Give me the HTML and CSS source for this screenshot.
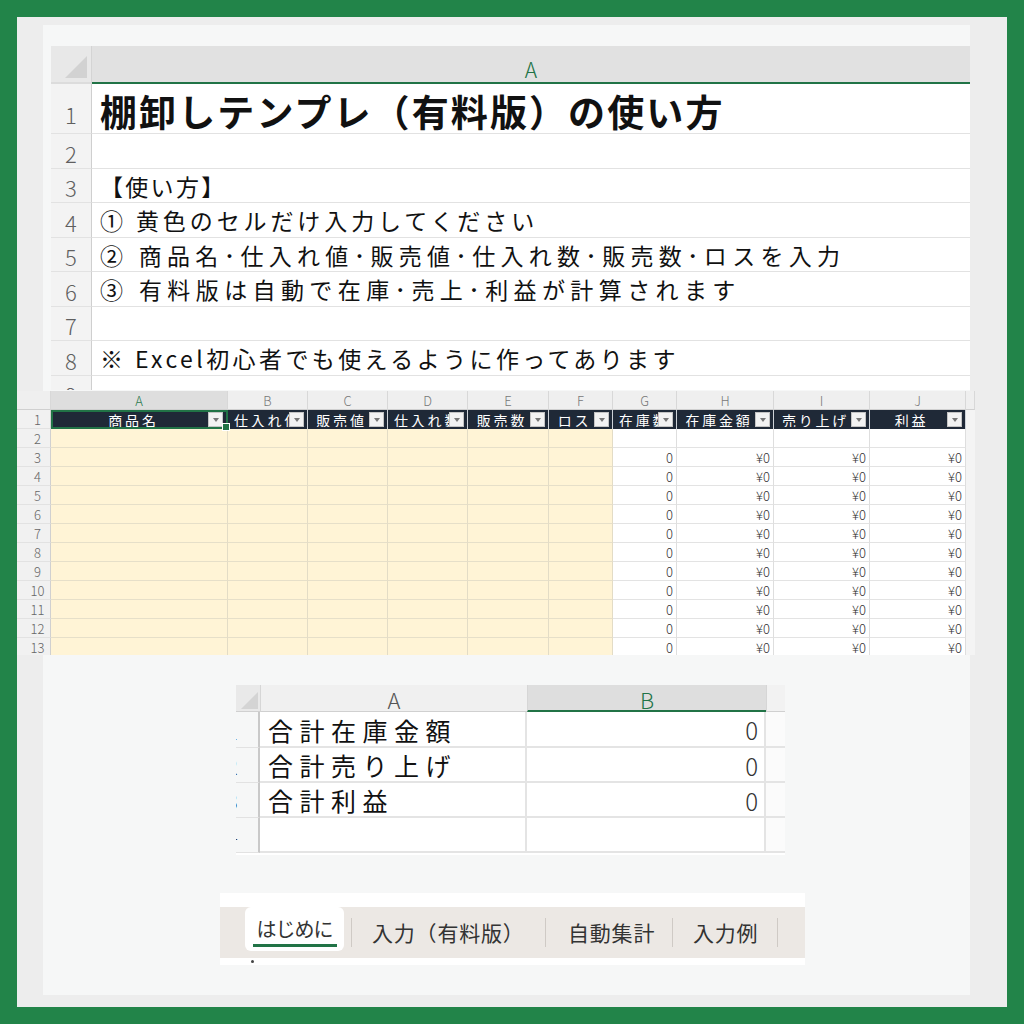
FILE: index.html
```html
<!DOCTYPE html>
<html lang="ja">
<head>
<meta charset="utf-8">
<title>棚卸しテンプレ</title>
<link rel="stylesheet" href="styles.css">
</head>
<body>
<div class="paper">

  <section class="s1">
    <div class="corner1"></div>
    <div class="ch1">A</div>
    <div class="rh1 r1">1</div><div class="c1 title">棚卸しテンプレ（有料版）の使い方</div>
    <div class="rh1">2</div><div class="c1"></div>
    <div class="rh1">3</div><div class="c1">【使い方】</div>
    <div class="rh1">4</div><div class="c1 l4">①&nbsp;黄色のセルだけ入力してください</div>
    <div class="rh1">5</div><div class="c1 l5">②&nbsp;商品名･仕入れ値･販売値･仕入れ数･販売数･ロスを入力</div>
    <div class="rh1">6</div><div class="c1 l6">③&nbsp;有料版は自動で在庫･売上･利益が計算されます</div>
    <div class="rh1">7</div><div class="c1"></div>
    <div class="rh1">8</div><div class="c1 l8">※&nbsp;Excel初心者でも使えるように作ってあります</div>
    <div class="rh1">9</div><div class="c1"></div>
  </section>

  <section class="s2">
    <div class="ch2"></div>
    <div class="ch2 sel">A</div><div class="ch2">B</div><div class="ch2">C</div><div class="ch2">D</div><div class="ch2">E</div><div class="ch2">F</div><div class="ch2">G</div><div class="ch2">H</div><div class="ch2">I</div><div class="ch2">J</div><div class="ch2"></div>

    <div class="rh2">1</div>
    <div class="hd a1"><span>商品名</span><i></i></div>
    <div class="hd"><span>仕入れ値</span><i></i></div>
    <div class="hd"><span>販売値</span><i></i></div>
    <div class="hd"><span>仕入れ数</span><i></i></div>
    <div class="hd"><span>販売数</span><i></i></div>
    <div class="hd"><span>ロス</span><i></i></div>
    <div class="hd"><span>在庫数</span><i></i></div>
    <div class="hd"><span>在庫金額</span><i></i></div>
    <div class="hd"><span>売り上げ</span><i></i></div>
    <div class="hd"><span>利益</span><i></i></div>
    <div class="tl"></div>

    <div class="rh2">2</div><div class="y"></div><div class="y"></div><div class="y"></div><div class="y"></div><div class="y"></div><div class="y"></div><div class="n"></div><div class="n"></div><div class="n"></div><div class="n"></div><div class="tl"></div>
    <div class="rh2">3</div><div class="y"></div><div class="y"></div><div class="y"></div><div class="y"></div><div class="y"></div><div class="y"></div><div class="n">0</div><div class="n">¥0</div><div class="n">¥0</div><div class="n">¥0</div><div class="tl"></div>
    <div class="rh2">4</div><div class="y"></div><div class="y"></div><div class="y"></div><div class="y"></div><div class="y"></div><div class="y"></div><div class="n">0</div><div class="n">¥0</div><div class="n">¥0</div><div class="n">¥0</div><div class="tl"></div>
    <div class="rh2">5</div><div class="y"></div><div class="y"></div><div class="y"></div><div class="y"></div><div class="y"></div><div class="y"></div><div class="n">0</div><div class="n">¥0</div><div class="n">¥0</div><div class="n">¥0</div><div class="tl"></div>
    <div class="rh2">6</div><div class="y"></div><div class="y"></div><div class="y"></div><div class="y"></div><div class="y"></div><div class="y"></div><div class="n">0</div><div class="n">¥0</div><div class="n">¥0</div><div class="n">¥0</div><div class="tl"></div>
    <div class="rh2">7</div><div class="y"></div><div class="y"></div><div class="y"></div><div class="y"></div><div class="y"></div><div class="y"></div><div class="n">0</div><div class="n">¥0</div><div class="n">¥0</div><div class="n">¥0</div><div class="tl"></div>
    <div class="rh2">8</div><div class="y"></div><div class="y"></div><div class="y"></div><div class="y"></div><div class="y"></div><div class="y"></div><div class="n">0</div><div class="n">¥0</div><div class="n">¥0</div><div class="n">¥0</div><div class="tl"></div>
    <div class="rh2">9</div><div class="y"></div><div class="y"></div><div class="y"></div><div class="y"></div><div class="y"></div><div class="y"></div><div class="n">0</div><div class="n">¥0</div><div class="n">¥0</div><div class="n">¥0</div><div class="tl"></div>
    <div class="rh2">10</div><div class="y"></div><div class="y"></div><div class="y"></div><div class="y"></div><div class="y"></div><div class="y"></div><div class="n">0</div><div class="n">¥0</div><div class="n">¥0</div><div class="n">¥0</div><div class="tl"></div>
    <div class="rh2">11</div><div class="y"></div><div class="y"></div><div class="y"></div><div class="y"></div><div class="y"></div><div class="y"></div><div class="n">0</div><div class="n">¥0</div><div class="n">¥0</div><div class="n">¥0</div><div class="tl"></div>
    <div class="rh2">12</div><div class="y"></div><div class="y"></div><div class="y"></div><div class="y"></div><div class="y"></div><div class="y"></div><div class="n">0</div><div class="n">¥0</div><div class="n">¥0</div><div class="n">¥0</div><div class="tl"></div>
    <div class="rh2">13</div><div class="y"></div><div class="y"></div><div class="y"></div><div class="y"></div><div class="y"></div><div class="y"></div><div class="n">0</div><div class="n">¥0</div><div class="n">¥0</div><div class="n">¥0</div><div class="tl"></div>
  </section>

  <section class="s3">
    <div class="corner3"></div>
    <div class="ch3">A</div>
    <div class="ch3 sel">B</div>
    <div class="ch3 tail"></div>

    <div class="rh3">1</div><div class="c3 txt">合計在庫金額</div><div class="c3 num">0</div><div class="c3 tail"></div>
    <div class="rh3">2</div><div class="c3 txt">合計売り上げ</div><div class="c3 num">0</div><div class="c3 tail"></div>
    <div class="rh3">3</div><div class="c3 txt">合計利益</div><div class="c3 num">0</div><div class="c3 tail"></div>
    <div class="rh3">4</div><div class="c3"></div><div class="c3"></div><div class="c3 tail"></div>
  </section>

  <section class="tabs">
    <div class="tabs-top"></div>
    <div class="tabbar">
      <div class="tab active"><span>はじめに</span></div>
      <div class="sep"></div>
      <div class="tab t2">入力（有料版）</div>
      <div class="sep"></div>
      <div class="tab t3">自動集計</div>
      <div class="sep"></div>
      <div class="tab t4">入力例</div>
      <div class="sep"></div>
    </div>
    <div class="tabs-bot"><span class="dot"></span></div>
  </section>

</div>
</body>
</html>
```

FILE: styles.css
```css
* { box-sizing: border-box; margin: 0; padding: 0; }

body {
  width: 1024px;
  height: 1024px;
  overflow: hidden;
  background: #228449;
  font-family: "Noto Sans CJK JP", "Noto Sans", sans-serif;
  color: #111;
}

.paper {
  margin: 17px 0 0 17px;
  width: 990px;
  height: 990px;
  background: #ededed linear-gradient(#f6f7f7, #f6f7f7) no-repeat 26px 8px / 927px 970px;
  padding-top: 29px;
  display: flex;
  flex-direction: column;
  align-items: flex-start;
}

/* ---------- sheet 1 ---------- */
.s1 {
  margin-left: 34px;
  width: 919px;
  height: 344px;
  overflow: hidden;
  background: #fff;
  display: grid;
  grid-template-columns: 41px 1fr;
  grid-template-rows: 38px 50px repeat(8, 34.5px);
}

.corner1 {
  position: relative;
  background: #e8e8e8;
  border-bottom: 2px solid #dcdcdc;
  border-right: 1px solid #d4d4d4;
}
.corner1::after {
  content: "";
  position: absolute;
  right: 4px;
  bottom: 4px;
  width: 22px;
  height: 22px;
  background: #d2d2d2;
  clip-path: polygon(100% 0, 100% 100%, 0 100%);
}

.ch1 {
  background: #e1e1e1;
  border-bottom: 2px solid #217346;
  color: #217346;
  font-size: 21px;
  font-weight: 300;
  display: flex;
  align-items: center;
  justify-content: center;
  padding-top: 10px;
}

.rh1 {
  background: #f3f3f3;
  border-right: 1px solid #cfcfcf;
  border-bottom: 1px solid #e2e2e2;
  color: #5f5f5f;
  font-size: 22px;
  font-weight: 300;
  display: flex;
  align-items: center;
  justify-content: center;
  padding-top: 4px;
  line-height: 1;
}
.rh1.r1 { padding-top: 10px; }

.c1 {
  border-bottom: 1px solid #e2e2e2;
  font-size: 23px;
  letter-spacing: 2.3px;
  padding-left: 8px;
  display: flex;
  align-items: center;
  padding-top: 2px;
  white-space: nowrap;
  line-height: 1;
}
.c1.l4 { letter-spacing: 3.9px; }
.c1.l5 { letter-spacing: 5.3px; }
.c1.l6 { letter-spacing: 5.4px; }
.c1.l8 { letter-spacing: 3.4px; }
.c1.title {
  font-size: 37px;
  font-weight: 700;
  letter-spacing: 2.1px;
  padding-top: 6px;
}

/* ---------- sheet 2 ---------- */
.s2 {
  margin-top: 1px;
  width: 958px;
  height: 264px;
  overflow: hidden;
  background: #fff;
  display: grid;
  grid-template-columns: 34px 177px 80px 80px 80px 81px 64px 64px 97px 96px 96px 9px;
  grid-template-rows: 19px;
  grid-auto-rows: 19px;
  font-size: 13px;
}

.ch2 {
  background: #efefef;
  border-right: 1px solid #d8d8d8;
  border-bottom: 1px solid #d0d0d0;
  color: #777;
  font-weight: 300;
  font-size: 13px;
  display: flex;
  align-items: center;
  justify-content: center;
  line-height: 1;
}
.ch2.sel { background: #dedede; color: #2a7a4c; }

.rh2 {
  background: #f1f1f1;
  border-right: 1px solid #d0d0d0;
  border-bottom: 1px solid #e2e2e2;
  color: #666;
  font-size: 13px;
  font-weight: 300;
  display: flex;
  align-items: center;
  justify-content: center;
  padding-left: 8px;
  line-height: 1;
}

.hd {
  background: #1f2937;
  color: #fff;
  display: flex;
  align-items: center;
  padding-right: 3px;
  border-right: 1px solid #cdd2d8;
  font-size: 14px;
  letter-spacing: 2.8px;
  line-height: 1;
}
.hd span {
  flex: 1;
  min-width: 0;
  overflow: hidden;
  white-space: nowrap;
  text-align: center;
  padding-left: 6px;
}
.hd i {
  flex: none;
  width: 15px;
  height: 15px;
  background: #f2f2f2;
  border: 1px solid #c4c4c4;
  display: flex;
  align-items: center;
  justify-content: center;
}
.hd i::before {
  content: "";
  border-left: 3.5px solid transparent;
  border-right: 3.5px solid transparent;
  border-top: 4px solid #777;
}
.hd.a1 {
  position: relative;
  border: 2px solid #217346;
}
.hd.a1::after {
  content: "";
  position: absolute;
  right: -4px;
  bottom: -4px;
  width: 6px;
  height: 6px;
  background: #217346;
  border: 1px solid #fff;
}

.y {
  background: #fff4d6;
  border-right: 1px solid #e3dcc6;
  border-bottom: 1px solid #e6dfc9;
}
.n {
  background: #fff;
  border-right: 1px solid #dedede;
  border-bottom: 1px solid #e3e3e3;
  color: #333;
  font-size: 13px;
  font-weight: 300;
  display: flex;
  align-items: center;
  justify-content: flex-end;
  padding-right: 3px;
  line-height: 1;
}
.tl { background: #f4f4f4; }

/* ---------- sheet 3 ---------- */
.s3 {
  margin-top: 30px;
  margin-left: 219px;
  width: 549px;
  height: 170px;
  overflow: hidden;
  display: grid;
  grid-template-columns: 24px 267px 239px 19px;
  grid-template-rows: 27px 36px 35px 35px 35px;
  background: #fff;
}

.corner3 {
  position: relative;
  background: #e9e9e9;
  border-bottom: 1px solid #d0d0d0;
}
.corner3::after {
  content: "";
  position: absolute;
  right: 2px;
  bottom: 2px;
  width: 17px;
  height: 17px;
  background: #d4d4d4;
  clip-path: polygon(100% 0, 100% 100%, 0 100%);
}

.ch3 {
  background: #f0f0f0;
  border-left: 1px solid #d6d6d6;
  border-bottom: 1px solid #d0d0d0;
  color: #555;
  font-size: 22px;
  font-weight: 300;
  display: flex;
  align-items: center;
  justify-content: center;
  line-height: 1;
  padding-top: 2px;
}
.ch3.sel {
  background: #dedede;
  color: #217346;
  border-bottom: 2px solid #217346;
}
.ch3.tail { background: #f2f2f2; }

.rh3 {
  background: #f6f7f7;
  border-right: 2px solid #c9c9c9;
  border-bottom: 1px solid #e2e2e2;
  overflow: hidden;
  color: #333;
  font-size: 22px;
  font-weight: 300;
  display: flex;
  align-items: center;
  justify-content: flex-start;
  text-indent: -10px;
  line-height: 1;
}

.c3 {
  border-bottom: 2px solid #e4e4e4;
  border-right: 2px solid #e4e4e4;
  display: flex;
  align-items: center;
  line-height: 1;
}
.c3.txt {
  font-size: 25px;
  letter-spacing: 6.5px;
  padding-left: 8px;
  padding-top: 2px;
  color: #111;
  white-space: nowrap;
}
.c3.num {
  justify-content: flex-end;
  font-size: 24px;
  font-weight: 300;
  color: #333;
  padding-right: 6px;
  padding-top: 2px;
}
.c3.tail { border-right: none; background: #fbfbfb; }

/* ---------- tabs ---------- */
.tabs {
  margin-top: 38px;
  margin-left: 203px;
  width: 585px;
  display: flex;
  flex-direction: column;
}
.tabs-top { height: 14px; background: #fff; }
.tabbar {
  height: 51px;
  background: #ece8e4;
  display: flex;
  align-items: flex-start;
  padding-left: 25px;
}
.tab {
  height: 44px;
  display: flex;
  align-items: center;
  font-size: 21px;
  letter-spacing: 0.8px;
  color: #333;
  white-space: nowrap;
  line-height: 1;
  padding-top: 6px;
}
.tab.active {
  width: 99px;
  background: #fff;
  border-radius: 6px;
  justify-content: center;
  padding-top: 8px;
}
.tab.active span {
  display: block;
  padding: 0 4px 5px;
  font-size: 20px;
  letter-spacing: -1px;
  border-bottom: 3px solid #217346;
}
.sep {
  width: 1px;
  height: 29px;
  margin-top: 11px;
  background: #cfcac5;
}
.tab.active + .sep { margin-left: 7px; }
.tab.t2 { width: 193px; padding-left: 20px; }
.tab.t3 { width: 126px; padding-left: 22px; }
.tab.t4 { width: 104px; padding-left: 20px; }

.tabs-bot {
  height: 7px;
  background: #fff;
  position: relative;
}
.dot {
  position: absolute;
  left: 31px;
  top: 2px;
  width: 3px;
  height: 3px;
  border-radius: 50%;
  background: #444;
}
```
